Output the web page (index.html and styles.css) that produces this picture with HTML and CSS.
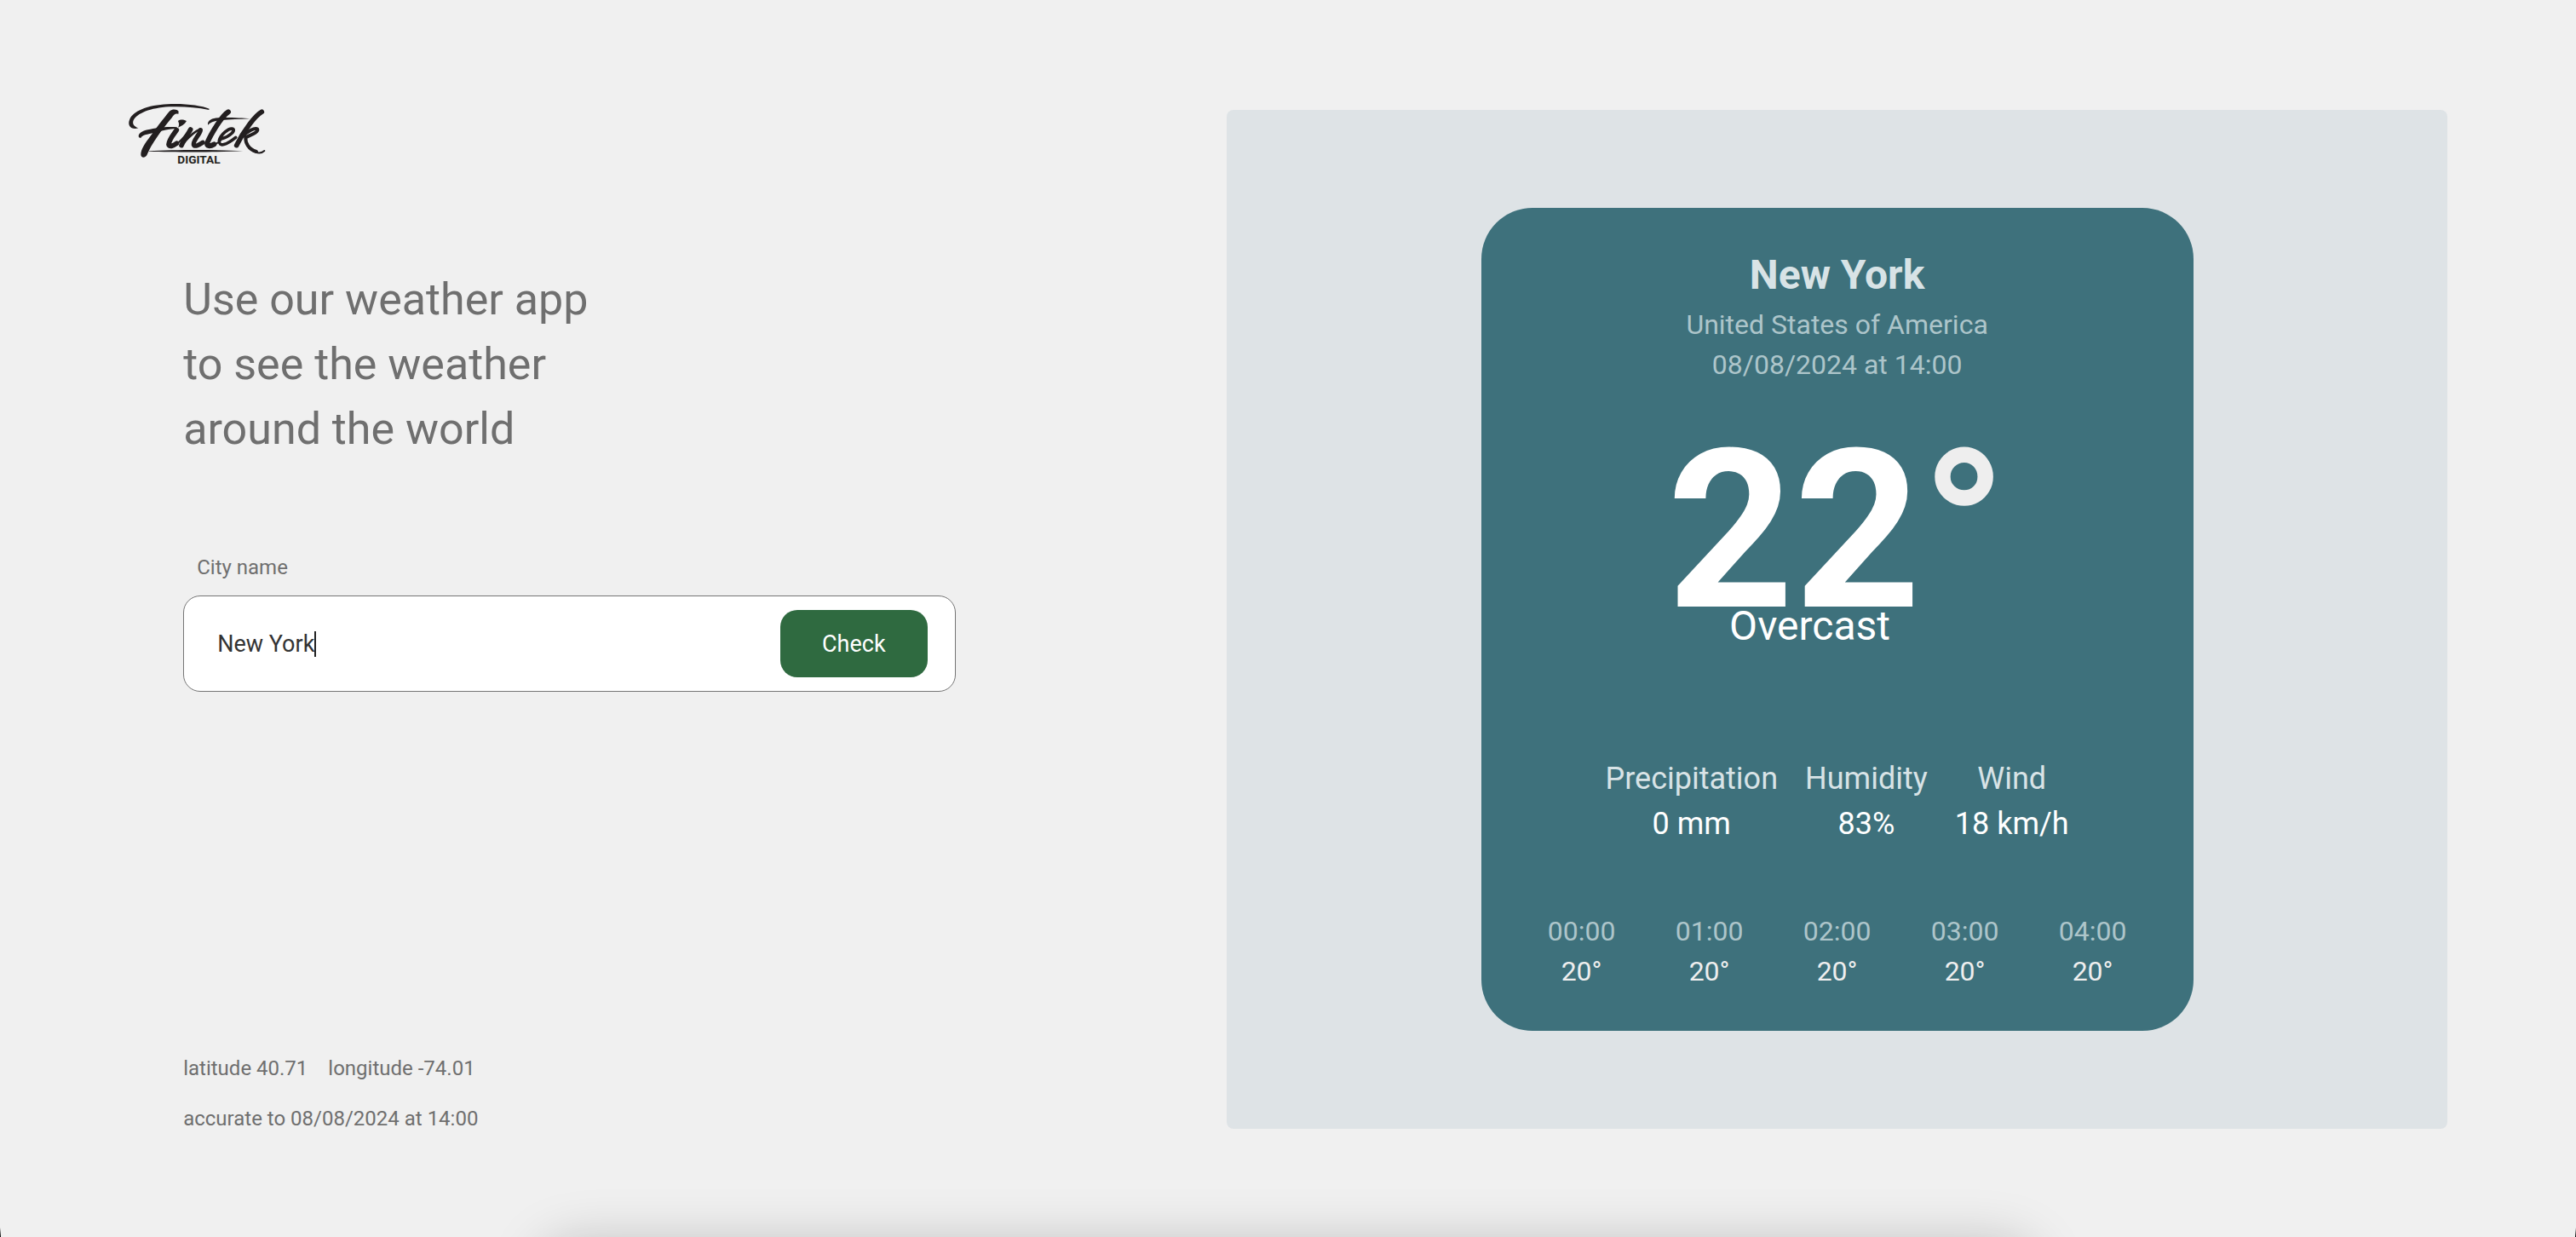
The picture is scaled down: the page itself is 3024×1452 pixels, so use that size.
FILE: index.html
```html
<!DOCTYPE html>
<html lang="en">
<head>
<meta charset="utf-8">
<meta name="viewport" content="width=device-width, initial-scale=1">
<title>Fintek Weather</title>
<link rel="stylesheet" href="styles.css">
</head>
<body>
<main class="page">
  <section class="intro">
    <a class="logo" href="#" aria-label="Fintek Digital">
      <svg class="logo-art" viewBox="0 0 600 330" aria-hidden="true">
        <g fill="#231f20">
          <path d="M97 151C72 158 58 142 66 122C78 91 130 70 200 67C262 64 318 72 347 83L346 87C300 77 250 74 205 76C140 80 92 99 80 124C75 136 82 147 98 151Z"/>
          <path d="M208 91C218 82 234 85 239 92L238 102C228 98 222 105 215 115C178 160 144 205 127 247C120 258 105 256 106 243C107 225 119 207 135 186C159 153 188 114 208 91Z"/>
          <path d="M99 184C94 170 112 161 130 157C160 151 190 145 233 148L233 153C200 153 160 166 134 172C118 175 110 179 106 186Z"/>
          <path d="M237 126C245 119 259 121 267 126C260 138 250 144 237 149C242 141 241 134 237 126Z"/>
          <path d="M342 140C340 118 366 114 400 114C436 114 468 116 490 118C452 120 420 121 390 123C370 125 352 128 342 140Z"/>
          <path d="M134 232C230 227 380 227 466 232C380 236 230 236 134 233Z"/>
        </g>
        <g fill="none" stroke="#231f20" stroke-linecap="round" stroke-linejoin="round">
          <path stroke-width="17" d="M232 158C221 174 206 190 204 209C205 219 220 214 232 205"/>
          <path stroke-width="6" d="M228 210C244 200 262 178 276 160"/>
          <path stroke-width="17" d="M281 156C272 174 257 192 249 212"/>
          <path stroke-width="8" d="M252 208C270 188 292 162 315 155"/>
          <path stroke-width="16" d="M316 158C316 170 289 196 292 209C296 219 312 210 324 202"/>
          <path stroke-width="18" d="M414 94C391 108 353 172 340 202C336 216 350 216 364 208"/>
          <path stroke-width="6" d="M362 211C374 205 380 202 388 194"/>
          <path stroke-width="11" d="M392 188C420 180 440 160 430 154C416 149 387 174 382 195C380 220 408 210 440 184"/>
          <path stroke-width="17" d="M532 94C510 106 468 160 443 212"/>
          <path stroke-width="12" d="M462 182C482 161 508 149 516 154C523 166 490 176 475 184C474 202 484 226 513 234"/>
          <path stroke-width="6" d="M508 235C523 241 535 237 541 231"/>
        </g>
        <text class="logo-word" x="235" y="276">DIGITAL</text>
      </svg>
    </a>
    <h1 class="headline">Use our weather app<br>to see the weather<br>around the world</h1>
    <form class="search">
      <label class="search-label" for="city">City name</label>
      <div class="search-box">
        <input class="search-input" id="city" type="text" value="New York">
        <span class="caret"></span>
        <button class="search-button" type="button">Check</button>
      </div>
    </form>
    <footer class="meta">
      <p class="coords"><span>latitude 40.71</span><span>longitude -74.01</span></p>
      <p>accurate to 08/08/2024 at 14:00</p>
    </footer>
  </section>

  <section class="panel">
    <article class="card">
      <h2 class="city">New York</h2>
      <p class="place">United States of America</p>
      <p class="place">08/08/2024 at 14:00</p>
      <p class="temp">22<span class="degree">°</span></p>
      <p class="condition">Overcast</p>
      <dl class="stats">
        <div><dt>Precipitation</dt><dd>0 mm</dd></div>
        <div><dt>Humidity</dt><dd>83%</dd></div>
        <div><dt>Wind</dt><dd>18 km/h</dd></div>
      </dl>
      <ol class="hours">
        <li><time>00:00</time><span>20°</span></li>
        <li><time>01:00</time><span>20°</span></li>
        <li><time>02:00</time><span>20°</span></li>
        <li><time>03:00</time><span>20°</span></li>
        <li><time>04:00</time><span>20°</span></li>
      </ol>
    </article>
  </section>
</main>
<div class="dock-shadow"></div>
</body>
</html>
```
FILE: styles.css
```css
* {
  box-sizing: border-box;
  margin: 0;
  padding: 0;
}

body {
  background: #f0f0f0;
  color: #6f6f6f;
  font-family: Roboto, "Liberation Sans", sans-serif;
  font-size: 24px;
  line-height: 36px;
  overflow: hidden;
}

/* dark slivers where the window's bottom corners curve in */
body::before,
body::after {
  content: "";
  position: fixed;
  bottom: 0;
  width: 1px;
  height: 11px;
  background: linear-gradient(transparent, #000);
}

body::before {
  left: 0;
}

body::after {
  right: 0;
}

.page {
  display: grid;
  grid-template-columns: 9fr 10fr;
  min-height: 100vh;
  padding: 129px 5% 127px;
}

.intro {
  display: flex;
  flex-direction: column;
  padding-left: 64px;
}

.logo {
  width: 200px;
  margin: -29px 0 0 -85px;
}

.logo-art {
  display: block;
  width: 100%;
}

.logo-word {
  fill: #231f20;
  font-family: Roboto, sans-serif;
  font-size: 41px;
  font-weight: 700;
}

.headline {
  margin-top: 104px;
  font-size: 52px;
  font-weight: 400;
  line-height: 76px;
}

.search {
  width: 74%;
  margin-top: 106px;
}

.search-label {
  display: block;
  margin: 0 0 15px 16px;
}

.search-box {
  display: flex;
  align-items: center;
  height: 113px;
  padding: 0 32px 0 39px;
  background: #fff;
  border: 1px solid #757575;
  border-radius: 20px;
}

.search-input {
  field-sizing: content;
  border: 0;
  outline: 0;
  background: none;
  color: #333;
  font: inherit;
  font-size: 27px;
}

.caret {
  width: 2px;
  height: 30px;
  background: #222;
}

.search-button {
  width: 173px;
  height: 79px;
  margin-left: auto;
  border: 0;
  border-radius: 20px;
  background: #2f6a40;
  color: #fff;
  font: inherit;
  font-size: 27px;
}

.meta {
  display: grid;
  gap: 35px;
  margin-top: auto;
  line-height: 24px;
}

.coords {
  display: flex;
  gap: 24px;
}

.panel {
  display: flex;
  align-items: center;
  justify-content: center;
  background: #dee3e6;
  border-radius: 8px;
}

.card {
  display: flex;
  flex-direction: column;
  align-items: center;
  width: 836px;
  padding: 44px 43px 46px;
  background: #3e717c;
  border-radius: 60px;
  color: #fff;
}

.city {
  color: #d8e3e6;
  font-size: 48px;
  line-height: 70px;
}

.place {
  color: #adc5ca;
  font-size: 32px;
  line-height: 47px;
}

.temp {
  margin-top: 94px;
  font-size: 260px;
  font-weight: 700;
  line-height: 154px;
}

.degree {
  color: #eee;
}

.condition {
  padding-right: 64px;
  font-size: 48px;
  line-height: 70px;
}

.stats {
  display: flex;
  gap: 32px;
  margin-top: 118px;
  font-size: 36px;
  line-height: 53px;
  text-align: center;
}

.stats dt {
  color: #d8e3e6;
}

.hours {
  display: grid;
  grid-template-columns: repeat(5, 1fr);
  width: 100%;
  margin-top: 76px;
  color: #eee;
  font-size: 32px;
  line-height: 47px;
  list-style: none;
  text-align: center;
}

.hours li {
  display: grid;
}

.hours time {
  color: #adc5ca;
}

/* soft shade cast along the bottom edge */
.dock-shadow {
  position: fixed;
  left: 21%;
  right: 21%;
  bottom: -100px;
  height: 100px;
  border-radius: 40px;
  box-shadow: 0 8px 64px rgba(0, 0, 0, 0.22);
}
```
